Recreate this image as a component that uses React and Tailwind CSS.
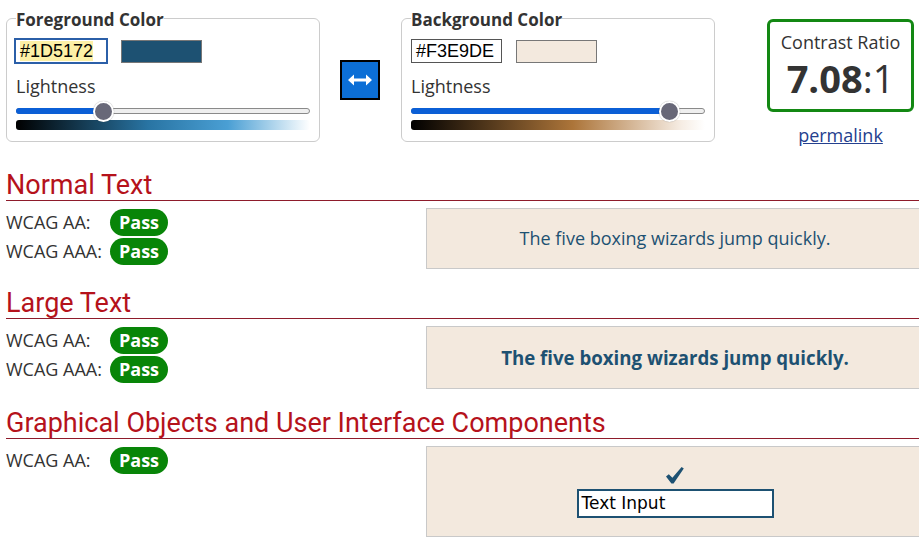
import React from 'react';

const fg = '#1D5172';

const Slider = ({ pos, gradient }) => (
  <div>
    <div className="relative h-[18px]">
      <div className="absolute left-0 right-0 top-[6px] h-[6px] rounded-full border border-[#8a8a8a] bg-[#efefef]" />
      <div className="absolute left-0 top-[6px] h-[6px] rounded-l-full bg-[#0b5fd6]" style={{ width: pos }} />
      <div
        className="absolute top-[-1px] h-[21px] w-[21px] rounded-full border-2 border-white bg-[#686878] shadow-[0_0_1px_rgba(0,0,0,0.4)]"
        style={{ left: pos - 10 }}
      />
    </div>
    <div className={`h-[10px] rounded-[3px] ${gradient}`} />
  </div>
);

const ColorFieldset = ({ legend, hex, focused, pos, gradient, swatch }) => (
  <fieldset className="w-[314px] rounded-md border border-[#cccccc] px-[9px] pb-[11px]">
    <legend className="pt-[4px] text-[17px] font-bold leading-[22px] text-[#333]">{legend}</legend>
    <div className="mt-[7px] flex h-[26px] items-center text-[18px] text-black [font-family:'Liberation_Sans',Arial,sans-serif]">
      {focused ? (
        <div className="ml-[-2px] flex h-[26px] w-[94px] items-center border-2 border-[#2b5fa8] pl-[4px]">
          <span className="bg-[#fdf0a6] leading-[20px]">{hex}</span>
        </div>
      ) : (
        <div className="flex h-[24px] w-[91px] items-center border border-[#555] pl-[4px] leading-[20px]">
          {hex}
        </div>
      )}
      <div className={`h-[23px] w-[81px] border border-[#777] ${focused ? 'ml-[13px]' : 'ml-[14px]'} ${swatch}`} />
    </div>
    <div className="mt-[10px] text-[18px] leading-[24px] text-[#333]">Lightness</div>
    <div className="mt-[4px]">
      <Slider pos={pos} gradient={gradient} />
    </div>
  </fieldset>
);

const Pass = () => (
  <span className="inline-flex h-[27px] w-[58px] items-center justify-center rounded-full bg-[#088508] text-[18px] font-bold text-white">
    Pass
  </span>
);

const Row = ({ label }) => (
  <div className="flex h-[29px] items-center">
    <span className="w-[104px] text-[18px] text-[#333]">{label}</span>
    <Pass />
  </div>
);

const Heading = ({ children, className = '' }) => (
  <h2
    className={`h-[31px] border-b border-[#8e1b2b] text-[27px] leading-[30px] text-[#b5121b] [font-family:Roboto,sans-serif] ${className}`}
  >
    {children}
  </h2>
);

export default function App() {
  return (
    <div className="h-[552px] w-[919px] overflow-hidden bg-white [font-family:'Open_Sans',sans-serif] text-[#333]">
      <div className="flex items-start pl-[6px] pt-[5px]">
        <ColorFieldset
          legend="Foreground Color"
          hex="#1D5172"
          focused
          pos={87}
          swatch="bg-[#1D5172]"
          gradient="bg-[linear-gradient(to_right,#000,hsl(203,60%,40%)_45%,#4a9fd4_72%,#fff)]"
        />
        <button className="ml-[20px] mt-[55px] flex h-[40px] w-[40px] items-center justify-center border-2 border-black bg-[#0c6fd6]">
          <svg width="24" height="14" viewBox="0 0 24 14" fill="white">
            <path d="M0 7 L6 1.5 L6 5.5 L18 5.5 L18 1.5 L24 7 L18 12.5 L18 8.5 L6 8.5 L6 12.5 Z" />
          </svg>
        </button>
        <div className="ml-[21px]">
          <ColorFieldset
            legend="Background Color"
            hex="#F3E9DE"
            pos={258}
            swatch="bg-[#F3E9DE]"
            gradient="bg-[linear-gradient(to_right,#000,hsl(31,50%,45%)_55%,#f6ede4_92%,#fff)]"
          />
        </div>
        <div className="ml-[52px] mt-[14px] flex w-[147px] flex-col items-center">
          <div className="flex h-[93px] w-[147px] flex-col items-center rounded-md border-[3px] border-[#138813] pt-[8px]">
            <div className="text-[18px] leading-[24px]">Contrast Ratio</div>
            <div className="mt-[1px] text-[38px] leading-[46px] text-[#333]">
              <span className="font-bold">7.08</span>:1
            </div>
          </div>
          <a href="#" className="mt-[11px] text-[18px] leading-[24px] text-[#24408e] underline">
            permalink
          </a>
        </div>
      </div>

      <div className="w-[930px] pl-[6px]">
        <Heading className="mt-[23px]">Normal Text</Heading>
        <div className="mt-[7px] flex">
          <div className="w-[420px]">
            <Row label="WCAG AA:" />
            <Row label="WCAG AAA:" />
          </div>
          <div className="flex h-[61px] w-[498px] items-center justify-center border border-[#c9c9c9] bg-[#F3E9DE] text-[18px] text-[#1D5172]">
            The five boxing wizards jump quickly.
          </div>
        </div>

        <Heading className="mt-[19px]">Large Text</Heading>
        <div className="mt-[7px] flex">
          <div className="w-[420px]">
            <Row label="WCAG AA:" />
            <Row label="WCAG AAA:" />
          </div>
          <div className="flex h-[63px] w-[498px] items-center justify-center border border-[#c9c9c9] bg-[#F3E9DE] text-[18.67px] font-bold text-[#1D5172]">
            The five boxing wizards jump quickly.
          </div>
        </div>

        <Heading className="mt-[19px]">Graphical Objects and User Interface Components</Heading>
        <div className="mt-[7px] flex">
          <div className="w-[420px]">
            <Row label="WCAG AA:" />
          </div>
          <div className="flex h-[91px] w-[498px] flex-col items-center border border-[#c9c9c9] bg-[#F3E9DE] pt-[20px]">
            <svg width="18" height="17" viewBox="0 0 18 17" fill={fg}>
              <path d="M0 9.6 L2.8 7.2 L6.4 10.8 L15.6 0 L17.8 1.6 L7.6 16.4 L5.4 16.4 Z" />
            </svg>
            <div className="mt-[5px] flex h-[29px] w-[197px] items-center border-2 border-[#1D5172] bg-white pl-[3px] text-[17px] text-black [font-family:'DejaVu_Sans',sans-serif]">
              Text Input
            </div>
          </div>
        </div>
      </div>
    </div>
  );
}
